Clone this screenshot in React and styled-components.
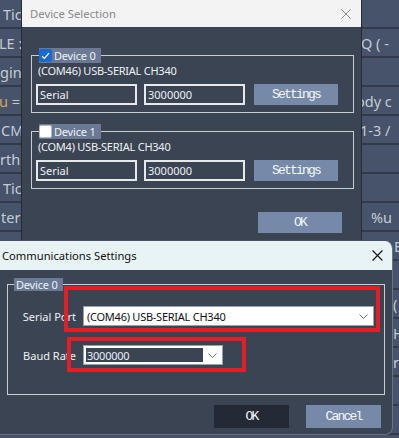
import React from 'react';
import styled, { createGlobalStyle } from 'styled-components';

const GlobalStyle = createGlobalStyle`
  html, body { margin: 0; padding: 0; overflow: hidden; background: #2f3744; }
  #root { width: 399px; height: 438px; }
`;

const UI_FONT = `"Noto Sans", "Segoe UI", sans-serif`;
const BTN_FONT = `"Liberation Mono", "Courier New", monospace`;

const Page = styled.div`
  position: relative;
  width: 399px;
  height: 438px;
  overflow: hidden;
  background: #2f3744;
  font-family: ${UI_FONT};
`;

/* ---------- background table ---------- */
const BgTable = styled.div`
  display: flex;
  flex-direction: column;
`;

const BgRow = styled.div`
  height: 29px;
  box-sizing: border-box;
  border-bottom: 2px solid #323a47;
  background: #47536a;
  display: flex;
  align-items: center;
  color: #c4cbd6;
  font-size: 14.5px;
  white-space: nowrap;
  overflow: hidden;
`;

const BgLeft = styled.div`
  width: 350px;
  flex: none;
  margin-left: ${p => p.$indent || 0}px;
  box-sizing: border-box;
  overflow: hidden;
`;

const BgRight = styled.div`
  flex: 1;
  padding-left: ${p => p.$indent || 0}px;
  overflow: hidden;
`;

const Accent = styled.span`
  color: #cfa65e;
`;

/* ---------- window chrome ---------- */
const SelectionWindow = styled.section`
  position: absolute;
  left: 21px;
  top: 0;
  width: 341px;
  height: 240px;
  box-sizing: border-box;
  background: #3b4453;
  border-left: 1px solid #262c36;
  border-right: 1px solid #262c36;
  display: flex;
  flex-direction: column;
`;

const CommWindow = styled.section`
  position: absolute;
  left: 0;
  top: 241px;
  width: 393px;
  height: 194px;
  box-sizing: border-box;
  background: #3b4453;
  border-right: 1px solid #6b7381;
  border-bottom: 1px solid #6b7381;
  border-radius: 0 8px 8px 0;
  overflow: hidden;
  display: flex;
  flex-direction: column;
`;

const TitleBar = styled.header`
  height: ${p => p.$h}px;
  flex: none;
  display: flex;
  align-items: center;
  justify-content: space-between;
  background: ${p => p.$bg};
  color: ${p => p.$fg};
  font-size: ${p => p.$size}px;
  padding-left: ${p => p.$pad}px;
  padding-right: ${p => p.$padR}px;
`;

const CloseIcon = ({ color, size, weight }) => (
  <svg width={size} height={size} viewBox="0 0 10 10">
    <path d="M0.5 0.5 L9.5 9.5 M9.5 0.5 L0.5 9.5" stroke={color} strokeWidth={weight} fill="none" />
  </svg>
);

/* ---------- device selection body ---------- */
const SelectionBody = styled.div`
  flex: 1;
  display: flex;
  flex-direction: column;
  padding: 21px 7px 0 9px;
`;

const Group = styled.fieldset`
  margin: 0;
  margin-top: ${p => p.$mt || 0}px;
  padding: ${p => p.$pad};
  border: 1px solid #c9ccd2;
  min-width: 0;
  display: flex;
  flex-direction: column;
`;

const Legend = styled.legend`
  padding: 0 6px 0 ${p => p.$padL || 0}px;
  margin-left: ${p => p.$ml}px;
  background: #6b7a94;
  color: #eef1f5;
  font-size: 11px;
  letter-spacing: -0.2px;
  line-height: ${p => p.$lh}px;
  height: ${p => p.$lh}px;
  display: flex;
  align-items: center;
  gap: 2px;
`;

const Check = styled.span`
  width: 13px;
  height: 13px;
  box-sizing: border-box;
  border-radius: 2px;
  display: inline-flex;
  align-items: center;
  justify-content: center;
  background: ${p => (p.$on ? '#1a68d1' : '#ffffff')};
  border: 1px solid ${p => (p.$on ? '#1a68d1' : '#b9b9b9')};
`;

const PortName = styled.div`
  color: #eef1f5;
  font-size: 11px;
  letter-spacing: -0.25px;
  line-height: 16px;
  padding-left: 2px;
`;

const FieldRow = styled.div`
  display: flex;
  align-items: center;
  margin-top: 5px;
  gap: 7px;
`;

const TextBox = styled.div`
  width: 101px;
  height: 21px;
  box-sizing: border-box;
  border: 2px solid #e6e8eb;
  background: #3b4453;
  color: #eef1f5;
  font-size: 11px;
  line-height: 17px;
  padding-left: 2px;
`;

const FlatButton = styled.div`
  width: ${p => p.$w}px;
  height: ${p => p.$h}px;
  margin-left: ${p => p.$ml || 0}px;
  flex: none;
  display: flex;
  align-items: center;
  justify-content: center;
  background: ${p => (p.$dark ? '#232a35' : '#7689a8')};
  color: #f4f6f9;
  font-family: ${BTN_FONT};
  font-size: 13px;
  letter-spacing: -1.8px;
`;

const DialogFooter = styled.div`
  display: flex;
  justify-content: flex-end;
  gap: ${p => p.$gap || 0}px;
  margin-top: ${p => p.$mt}px;
  padding-right: ${p => p.$pr}px;
`;

/* ---------- communications body ---------- */
const CommBody = styled.div`
  flex: 1;
  display: flex;
  flex-direction: column;
  padding: 8px 7px 0 7px;
`;

const SettingsGrid = styled.div`
  display: grid;
  grid-template-columns: 68px auto;
  column-gap: 7px;
  row-gap: 19px;
  align-items: center;
  margin-top: 15px;
`;

const FieldLabel = styled.div`
  text-align: right;
  color: #eef1f5;
  font-size: 11px;
  white-space: nowrap;
`;

const Combo = styled.div`
  width: ${p => p.$w}px;
  height: 20px;
  box-sizing: border-box;
  border: 1px solid #9aa0a8;
  background: #ffffff;
  display: flex;
  align-items: stretch;
`;

const ComboText = styled.div`
  flex: 1;
  display: flex;
  align-items: center;
  font-size: 11px;
  letter-spacing: -0.25px;
  padding-left: ${p => (p.$edit ? 1 : 3)}px;
  margin: ${p => (p.$edit ? '2px 0 2px 2px' : '0')};
  background: ${p => (p.$edit ? '#3b4453' : 'transparent')};
  color: ${p => (p.$edit ? '#e8eef6' : '#111111')};
`;

const ComboArrow = styled.div`
  width: 19px;
  flex: none;
  display: flex;
  align-items: center;
  justify-content: center;
`;

const Chevron = () => (
  <svg width="9" height="5" viewBox="0 0 9 5">
    <path d="M0.5 0.5 L4.5 4.5 L8.5 0.5" stroke="#6f747b" strokeWidth="1" fill="none" />
  </svg>
);

const Highlight = styled.div`
  position: absolute;
  left: ${p => p.$x}px;
  top: ${p => p.$y}px;
  width: ${p => p.$w}px;
  height: ${p => p.$h}px;
  box-sizing: border-box;
  border: 4px solid #e21f26;
  pointer-events: none;
`;

const bgRows = [
  { l: 'Tic', li: 3, r: '' },
  { l: 'LE :', li: -1, r: 'RQ ( -', ri: 3 },
  { l: 'gin', li: 0, r: '' },
  { l: 'u =', li: -1, accent: true, r: 'ody c', ri: 7 },
  { l: 'CM', li: 1, r: '1-3 /', ri: 9 },
  { l: 'rth', li: 0, r: '' },
  { l: 'Tic', li: 3, r: '' },
  { l: 'ter', li: 1, r: '%u', ri: 20 },
  { l: 'In', li: 1, r: 'E', ri: 43 },
  { l: '', r: '' },
  { l: '', r: '(', ri: 43 },
  { l: '', r: 'H', ri: 43 },
  { l: '', r: 'r', ri: 43 },
  { l: '', r: '', ri: 43 },
  { l: '', r: '', ri: 43 },
  { l: '', r: '' },
];

const devices = [
  { name: 'Device 0', port: '(COM46) USB-SERIAL CH340', on: true },
  { name: 'Device 1', port: '(COM4) USB-SERIAL CH340', on: false },
];

export default function App() {
  return (
    <Page>
      <GlobalStyle />
      <BgTable>
        {bgRows.map((r, i) => (
          <BgRow key={i}>
            <BgLeft $indent={r.li}>
              {r.accent ? (<><Accent>u</Accent> =</>) : r.l}
            </BgLeft>
            <BgRight $indent={r.ri}>{r.r}</BgRight>
          </BgRow>
        ))}
      </BgTable>

      <SelectionWindow>
        <TitleBar $h={27} $bg="#f3f3f3" $fg="#8a8a8a" $size={11.3} $pad={8} $padR={10}>
          <span>Device Selection</span>
          <CloseIcon color="#8f8f8f" size={10} weight={1} />
        </TitleBar>
        <SelectionBody>
          {devices.map((d, i) => (
            <Group key={d.name} $mt={i ? 11 : 0} $pad="0 15px 7px 4px">
              <Legend $ml={3} $lh={15}>
                <Check $on={d.on}>
                  {d.on && (
                    <svg width="9" height="8" viewBox="0 0 9 8">
                      <path d="M1 4.2 L3.4 6.5 L8 1.2" stroke="#ffffff" strokeWidth="1.2" fill="none" />
                    </svg>
                  )}
                </Check>
                {d.name}
              </Legend>
              <PortName>{d.port}</PortName>
              <FieldRow>
                <TextBox>Serial</TextBox>
                <TextBox>3000000</TextBox>
                <FlatButton $w={84} $h={21} $ml={2}>Settings</FlatButton>
              </FieldRow>
            </Group>
          ))}
          <DialogFooter $mt={23} $pr={12}>
            <FlatButton $w={84} $h={21}>OK</FlatButton>
          </DialogFooter>
        </SelectionBody>
      </SelectionWindow>

      <CommWindow>
        <TitleBar $h={29} $bg="#e8f3f5" $fg="#111111" $size={11.2} $pad={2} $padR={9}>
          <span>Communications Settings</span>
          <CloseIcon color="#1a1a1a" size={11} weight={1.1} />
        </TitleBar>
        <CommBody>
          <Group $pad="0 9px 29px 0">
            <Legend $ml={6} $lh={13} $padL={2}>Device 0</Legend>
            <SettingsGrid>
              <FieldLabel>Serial Port</FieldLabel>
              <Combo $w={291}>
                <ComboText>(COM46) USB-SERIAL CH340</ComboText>
                <ComboArrow><Chevron /></ComboArrow>
              </Combo>
              <FieldLabel>Baud Rate</FieldLabel>
              <Combo $w={140}>
                <ComboText $edit>3000000</ComboText>
                <ComboArrow><Chevron /></ComboArrow>
              </Combo>
            </SettingsGrid>
          </Group>
          <DialogFooter $mt={10} $pr={4} $gap={17}>
            <FlatButton $w={75} $h={23} $dark>OK</FlatButton>
            <FlatButton $w={75} $h={23}>Cancel</FlatButton>
          </DialogFooter>
        </CommBody>
        <Highlight $x={64} $y={45} $w={316} $h={46} />
        <Highlight $x={67} $y={96} $w={179} $h={35} />
      </CommWindow>
    </Page>
  );
}
